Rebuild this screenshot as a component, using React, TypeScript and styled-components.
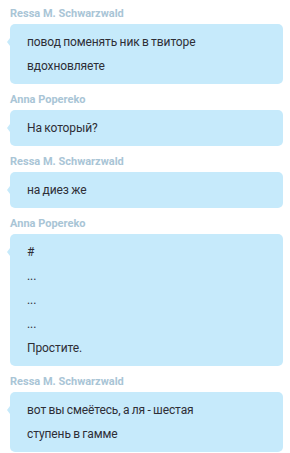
import React from "react";
import styled, { createGlobalStyle } from "styled-components";

const Global = createGlobalStyle`
  html, body { margin: 0; padding: 0; background: #ffffff; }
  body { font-family: Roboto, "Noto Sans", sans-serif; }
`;

const Feed = styled.div`
  display: flex;
  flex-direction: column;
  gap: 9px;
  padding: 7px 7px 0 10px;
`;

const Message = styled.div`
  display: flex;
  flex-direction: column;
  gap: 3px;
`;

const Author = styled.div`
  font-size: 11px;
  line-height: 14px;
  font-weight: 700;
  color: #a9c5d6;
  white-space: nowrap;
`;

const Bubble = styled.div`
  position: relative;
  background: #c6eafb;
  border-radius: 5px;
  padding: 6px 12px 6px 17px;
  color: #2e2e36;
  font-size: 12px;
  letter-spacing: -0.1px;
  word-spacing: -0.5px;
  line-height: 24px;

  &::before {
    content: "";
    position: absolute;
    left: -3px;
    top: 14px;
    border-top: 4px solid transparent;
    border-bottom: 4px solid transparent;
    border-right: 3px solid #c6eafb;
  }
`;

const Line = styled.div``;

type Msg = { author: string; lines: string[] };

const messages: Msg[] = [
  { author: "Ressa M. Schwarzwald", lines: ["повод поменять ник в твиторе", "вдохновляете"] },
  { author: "Anna Popereko", lines: ["На который?"] },
  { author: "Ressa M. Schwarzwald", lines: ["на диез же"] },
  { author: "Anna Popereko", lines: ["#", "...", "...", "...", "Простите."] },
  { author: "Ressa M. Schwarzwald", lines: ["вот вы смеётесь, а ля - шестая", "ступень в гамме"] },
];

export default function App() {
  return (
    <>
      <Global />
      <Feed>
        {messages.map((m, i) => (
          <Message key={i}>
            <Author>{m.author}</Author>
            <Bubble>
              {m.lines.map((l, j) => (
                <Line key={j}>{l}</Line>
              ))}
            </Bubble>
          </Message>
        ))}
      </Feed>
    </>
  );
}
